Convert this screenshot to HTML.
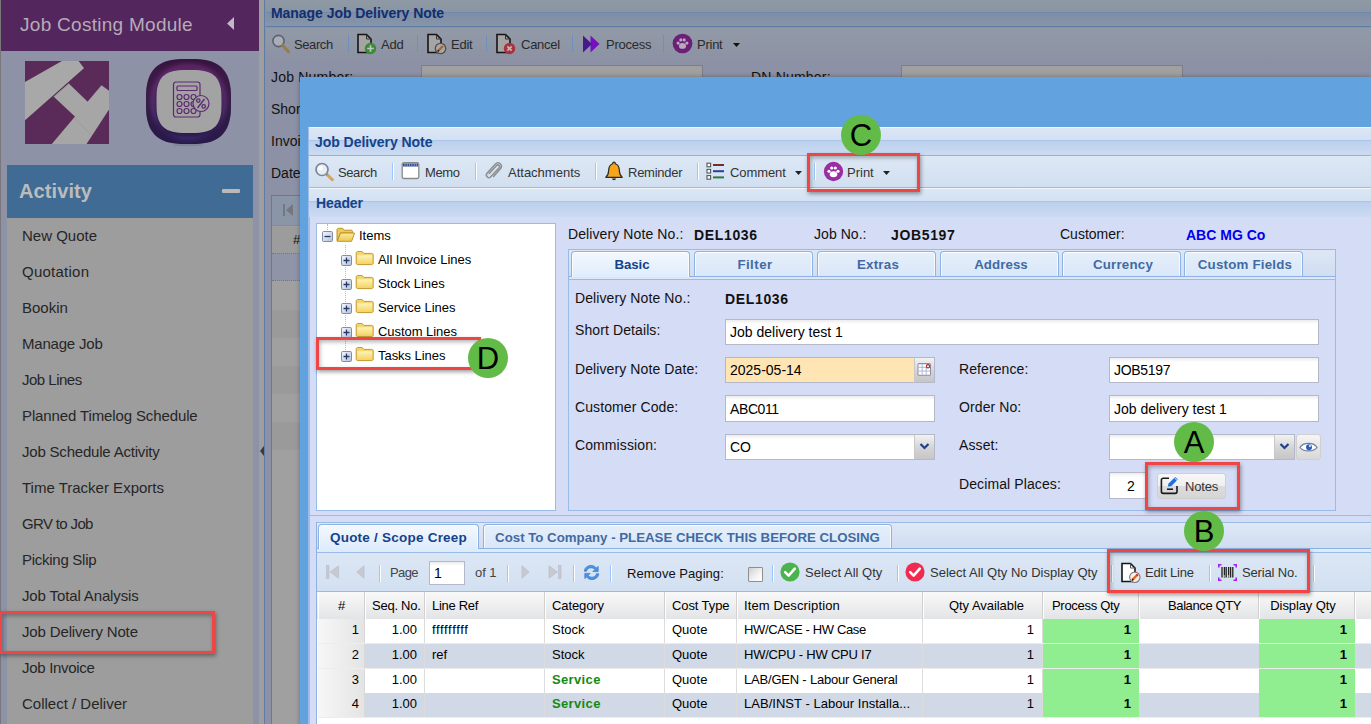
<!DOCTYPE html>
<html>
<head>
<meta charset="utf-8">
<title>Job Delivery Note</title>
<style>
*{box-sizing:border-box;margin:0;padding:0}
html,body{width:1371px;height:724px;overflow:hidden;background:#8d92a6;font-family:"Liberation Sans",sans-serif;font-size:13px;color:#000}
.a{position:absolute}
.t{position:absolute;white-space:nowrap;line-height:1}
/* ---------- sidebar ---------- */
#sb-head{left:1px;top:0;width:258px;height:51px;background:#53265d}
#sb-title{left:20px;top:15px;font-size:19px;color:#b6abb9;letter-spacing:.28px}
#act{left:7px;top:165px;width:246px;height:53px;background:#3f6b95}
#act-t{left:19px;top:181px;font-size:20px;font-weight:bold;color:#bcbcbc;letter-spacing:.1px}
#list{left:7px;top:218px;width:246px;height:507px;background:#9d9d9d}
.mi{left:22px;font-size:15px;color:#262626;letter-spacing:0}
/* ---------- background main panel ---------- */
#bgm{left:264px;top:0;width:1107px;height:724px;background:#8c91a5;border-left:1px solid #5f7ca6}
.bt{font-size:13px;color:#2a2a2a}
.bl{font-size:14px;color:#111}
/* ---------- window ---------- */
#win{left:300px;top:77px;width:1071px;height:660px;background:#62a3df;box-shadow:0 0 5px rgba(0,0,0,.3)}
#wp{left:308px;top:127px;width:1063px;height:597px;background:#d5dcf5;border-left:2px solid #9cbde9;border-top:1px solid #f2f6fc}
.hd{background:linear-gradient(#dbe7f5 0,#d3e1f3 12px,#abc5ea 12px,#abc5ea 13px,#bcd0ed 13px,#cbdbf1 27px);border-bottom:1px solid #8db2e3}
.ht{font-size:13px;font-weight:bold;color:#15428b}
.tb{background:linear-gradient(#dde8f5,#d1dff0);border-bottom:1px solid #99bbe8}
.tt{font-size:13px;color:#333;letter-spacing:.35px}
.sep{width:2px;border-left:1px solid #98c8ff;border-right:1px solid #fff}
.lb{font-size:14px;color:#111}
.in{background:#fff;border:1px solid #b5b8c8;font-size:14px;line-height:23px;padding-left:4px;height:25px;white-space:nowrap;overflow:hidden;
 background-image:linear-gradient(#ececec 0,#fff 4px)}
.tab{top:251px;padding-left:3px;height:25px;width:119px;border:1px solid #8db2e3;border-bottom:none;border-radius:4px 4px 0 0;background:linear-gradient(#e6effb,#d9e7f8);
 box-shadow:inset 0 1px 0 #fff,inset 1px 0 0 rgba(255,255,255,.7),inset -1px 0 0 rgba(255,255,255,.7);text-align:center;font-weight:bold;font-size:13.3px;color:#416aa3;line-height:25px}
.tab.on{background:linear-gradient(#f4f8fd,#deecfd);color:#15428b;height:26px}
.red{border:3px solid #ef4545;box-shadow:1px 2px 4px rgba(0,0,0,.38),inset 1px 2px 4px rgba(0,0,0,.3)}
.gc{width:38px;height:38px;border-radius:19px;background:#62bb46;text-align:center;font-size:31px;line-height:38px;color:#000}
.tr{font-size:13px;color:#000;letter-spacing:.2px}
.gh{top:592px;height:27px;font-size:13px;line-height:28px;color:#000;border-right:1px solid #d0d0d0;border-left:1px solid #fff;letter-spacing:-.1px;margin-left:1px;
 background:linear-gradient(#f9f9f9,#e3e4e6);white-space:nowrap;overflow:hidden;padding-left:6px}
.gr{left:318px;width:1054px;height:25px;background:#fff;border-bottom:1px solid #ededed}
.gr.alt{background:#d1d8e6}
.c{position:absolute;top:0;height:24px;line-height:21px;font-size:13px;white-space:nowrap;overflow:hidden;padding:0 7px;letter-spacing:0}
.r{text-align:right}
.g{background:#90ee90;font-weight:bold}
</style>
</head>
<body>
<!-- SIDEBAR -->
<div class="a" style="left:0;top:0;width:1px;height:724px;background:#78787a"></div>
<div class="a" id="sb-head"></div>
<div class="t" id="sb-title">Job Costing Module</div>
<svg class="a" style="left:226px;top:16px" width="9" height="15"><path d="M8 1 L1 7.5 L8 14 Z" fill="#c3b6c7"/></svg>
<div class="a" id="act"></div>
<div class="t" id="act-t">Activity</div>
<div class="a" style="left:222px;top:189px;width:18px;height:4px;background:#b9b9b9;border-radius:1px"></div>
<div class="a" id="list"></div>
<svg class="a" style="left:25px;top:61px" width="84" height="83" viewBox="0 0 580 573" preserveAspectRatio="none">
<rect width="580" height="573" fill="#5a2b58"/>
<polygon points="528,168 580,205 580,335 425,573 185,573" fill="#a6a6a6"/>
<polygon points="302,155 440,288 470,500 197,245" fill="#a6a6a6"/>
<polygon points="0,145 255,0 370,0 408,50 0,410" fill="#a8a8a8"/>
<path d="M408,52 L0,412" stroke="#4a2248" stroke-width="5" opacity=".5"/>
<path d="M337,390 L455,510" stroke="#8e8e8e" stroke-width="3"/>
<path d="M302,157 L200,247" stroke="#8a8a8a" stroke-width="6"/>
</svg>
<svg class="a" style="left:144px;top:57px" width="89" height="91" viewBox="-2 -2 89 91">
<defs>
<linearGradient id="lg2" x1="0" y1="0" x2="0" y2="1"><stop offset="0" stop-color="#4c1d55"/><stop offset=".15" stop-color="#5e2669"/><stop offset=".5" stop-color="#4e2a64"/><stop offset="1" stop-color="#37296e"/></linearGradient>
<radialGradient id="rg2" cx=".5" cy=".5" r=".5"><stop offset=".86" stop-color="#000" stop-opacity="0"/><stop offset="1" stop-color="#1a0a24" stop-opacity=".5"/></radialGradient>
<filter id="bl" x="-20%" y="-20%" width="140%" height="140%"><feGaussianBlur stdDeviation="2"/></filter>
</defs>
<ellipse cx="42" cy="86" rx="16" ry="1.2" fill="#7f8398"/>
<path d="M85.0,42.5 L84.9,50.4 L84.6,55.2 L84.0,59.2 L83.2,62.8 L82.2,66.0 L81.0,68.9 L79.5,71.5 L77.9,73.8 L76.0,76.0 L73.8,77.9 L71.5,79.5 L68.9,81.0 L66.0,82.2 L62.8,83.2 L59.2,84.0 L55.2,84.6 L50.4,84.9 L42.5,85.0 L34.6,84.9 L29.8,84.6 L25.8,84.0 L22.2,83.2 L19.0,82.2 L16.1,81.0 L13.5,79.5 L11.2,77.9 L9.0,76.0 L7.1,73.8 L5.5,71.5 L4.0,68.9 L2.8,66.0 L1.8,62.8 L1.0,59.2 L0.4,55.2 L0.1,50.4 L0.0,42.5 L0.1,34.6 L0.4,29.8 L1.0,25.8 L1.8,22.2 L2.8,19.0 L4.0,16.1 L5.5,13.5 L7.1,11.2 L9.0,9.0 L11.2,7.1 L13.5,5.5 L16.1,4.0 L19.0,2.8 L22.2,1.8 L25.8,1.0 L29.8,0.4 L34.6,0.1 L42.5,0.0 L50.4,0.1 L55.2,0.4 L59.2,1.0 L62.8,1.8 L66.0,2.8 L68.9,4.0 L71.5,5.5 L73.8,7.1 L76.0,9.0 L77.9,11.2 L79.5,13.5 L81.0,16.1 L82.2,19.0 L83.2,22.2 L84.0,25.8 L84.6,29.8 L84.9,34.6Z" fill="url(#lg2)"/>
<path d="M85.0,42.5 L84.9,50.4 L84.6,55.2 L84.0,59.2 L83.2,62.8 L82.2,66.0 L81.0,68.9 L79.5,71.5 L77.9,73.8 L76.0,76.0 L73.8,77.9 L71.5,79.5 L68.9,81.0 L66.0,82.2 L62.8,83.2 L59.2,84.0 L55.2,84.6 L50.4,84.9 L42.5,85.0 L34.6,84.9 L29.8,84.6 L25.8,84.0 L22.2,83.2 L19.0,82.2 L16.1,81.0 L13.5,79.5 L11.2,77.9 L9.0,76.0 L7.1,73.8 L5.5,71.5 L4.0,68.9 L2.8,66.0 L1.8,62.8 L1.0,59.2 L0.4,55.2 L0.1,50.4 L0.0,42.5 L0.1,34.6 L0.4,29.8 L1.0,25.8 L1.8,22.2 L2.8,19.0 L4.0,16.1 L5.5,13.5 L7.1,11.2 L9.0,9.0 L11.2,7.1 L13.5,5.5 L16.1,4.0 L19.0,2.8 L22.2,1.8 L25.8,1.0 L29.8,0.4 L34.6,0.1 L42.5,0.0 L50.4,0.1 L55.2,0.4 L59.2,1.0 L62.8,1.8 L66.0,2.8 L68.9,4.0 L71.5,5.5 L73.8,7.1 L76.0,9.0 L77.9,11.2 L79.5,13.5 L81.0,16.1 L82.2,19.0 L83.2,22.2 L84.0,25.8 L84.6,29.8 L84.9,34.6Z" fill="url(#rg2)"/>
<path d="M74.0,46.5 L73.9,52.7 L73.7,56.2 L73.3,59.0 L72.8,61.5 L72.1,63.7 L71.3,65.7 L70.3,67.5 L69.1,69.1 L67.8,70.5 L66.3,71.8 L64.7,72.9 L62.8,73.8 L60.8,74.7 L58.5,75.3 L56.0,75.8 L53.0,76.2 L49.4,76.4 L43.0,76.5 L36.6,76.4 L33.0,76.2 L30.0,75.8 L27.5,75.3 L25.2,74.7 L23.2,73.8 L21.3,72.9 L19.7,71.8 L18.2,70.5 L16.9,69.1 L15.7,67.5 L14.7,65.7 L13.9,63.7 L13.2,61.5 L12.7,59.0 L12.3,56.2 L12.1,52.7 L12.0,46.5 L12.1,40.3 L12.3,36.8 L12.7,34.0 L13.2,31.5 L13.9,29.3 L14.7,27.3 L15.7,25.5 L16.9,23.9 L18.2,22.5 L19.7,21.2 L21.3,20.1 L23.2,19.2 L25.2,18.3 L27.5,17.7 L30.0,17.2 L33.0,16.8 L36.6,16.6 L43.0,16.5 L49.4,16.6 L53.0,16.8 L56.0,17.2 L58.5,17.7 L60.8,18.3 L62.8,19.2 L64.7,20.1 L66.3,21.2 L67.8,22.5 L69.1,23.9 L70.3,25.5 L71.3,27.3 L72.1,29.3 L72.8,31.5 L73.3,34.0 L73.7,36.8 L73.9,40.3Z" fill="#140820" opacity=".6" filter="url(#bl)"/>
<path d="M75.5,42.5 L75.4,49.0 L75.2,52.7 L74.8,55.7 L74.2,58.3 L73.5,60.6 L72.6,62.6 L71.6,64.5 L70.4,66.2 L69.0,67.7 L67.4,69.0 L65.7,70.2 L63.8,71.2 L61.6,72.1 L59.3,72.8 L56.6,73.3 L53.5,73.7 L49.7,73.9 L43.0,74.0 L36.3,73.9 L32.5,73.7 L29.4,73.3 L26.7,72.8 L24.4,72.1 L22.2,71.2 L20.3,70.2 L18.6,69.0 L17.0,67.7 L15.6,66.2 L14.4,64.5 L13.4,62.6 L12.5,60.6 L11.8,58.3 L11.2,55.7 L10.8,52.7 L10.6,49.0 L10.5,42.5 L10.6,36.0 L10.8,32.3 L11.2,29.3 L11.8,26.7 L12.5,24.4 L13.4,22.4 L14.4,20.5 L15.6,18.8 L17.0,17.3 L18.6,16.0 L20.3,14.8 L22.2,13.8 L24.4,12.9 L26.7,12.2 L29.4,11.7 L32.5,11.3 L36.3,11.1 L43.0,11.0 L49.7,11.1 L53.5,11.3 L56.6,11.7 L59.3,12.2 L61.6,12.9 L63.8,13.8 L65.7,14.8 L67.4,16.0 L69.0,17.3 L70.4,18.8 L71.6,20.5 L72.6,22.4 L73.5,24.4 L74.2,26.7 L74.8,29.3 L75.2,32.3 L75.4,36.0Z" fill="#a3a3a3"/>
<g fill="none" stroke="#5d2a72" stroke-width="1.2">
<rect x="27.5" y="23" width="26.5" height="35" rx="2.5"/>
<rect x="31" y="27" width="20" height="4.5" rx="1"/>
<circle cx="33.5" cy="38" r="2.5"/><circle cx="40.5" cy="38" r="2.5"/><circle cx="47.5" cy="38" r="2.5"/>
<circle cx="33.5" cy="45" r="2.5"/><circle cx="40.5" cy="45" r="2.5"/><circle cx="47.5" cy="45" r="2.5"/>
<circle cx="33.5" cy="52" r="2.5"/><circle cx="40.5" cy="52" r="2.5"/><circle cx="47.5" cy="52" r="2.5"/>
<circle cx="55" cy="44.5" r="8" fill="#a3a3a3"/>
</g>
<g stroke="#5d2a72" stroke-width="1.3" fill="none"><path d="M58.5 40 L51.5 49"/><circle cx="52.3" cy="41.6" r="1.7"/><circle cx="57.7" cy="47.4" r="1.7"/></g>
</svg>
<!-- splitter -->
<div class="a" style="left:259px;top:0;width:6px;height:724px;background:#9e9e9e"></div>
<div class="t mi" style="top:228px">New Quote</div>
<div class="t mi" style="top:264px;letter-spacing:.25px">Quotation</div>
<div class="t mi" style="top:300px">Bookin</div>
<div class="t mi" style="top:336px;letter-spacing:-.2px">Manage Job</div>
<div class="t mi" style="top:372px;letter-spacing:-0.5px">Job Lines</div>
<div class="t mi" style="top:408px;letter-spacing:-.12px">Planned Timelog Schedule</div>
<div class="t mi" style="top:444px;letter-spacing:-0.2px">Job Schedule Activity</div>
<div class="t mi" style="top:480px">Time Tracker Exports</div>
<div class="t mi" style="top:516px;letter-spacing:-0.65px">GRV to Job</div>
<div class="t mi" style="top:552px;letter-spacing:-0.27px">Picking Slip</div>
<div class="t mi" style="top:588px;letter-spacing:-0.13px">Job Total Analysis</div>
<div class="t mi" style="top:624px;letter-spacing:-0.15px">Job Delivery Note</div>
<div class="t mi" style="top:660px;letter-spacing:-0.3px">Job Invoice</div>
<div class="t mi" style="top:696px">Collect / Deliver</div>
<div class="a red" style="left:-1px;top:611px;width:216px;height:43px"></div>

<!-- BACKGROUND MAIN -->
<div class="a" id="bgm"></div>

<div class="a" style="left:266px;top:0;width:1105px;height:27px;background:linear-gradient(#8e99a5 0,#8995a2 12px,#7088a9 12px,#7088a9 13px,#7c8da5 13px,#8996a9 27px);border-bottom:1px solid #5f7ca6"></div>
<div class="t" style="left:271px;top:6px;font-size:14px;font-weight:bold;color:#112e6e;letter-spacing:-.05px">Manage Job Delivery Note</div>
<div class="a" style="left:266px;top:28px;width:1105px;height:33px;background:linear-gradient(#929aa7,#8c92a4)"></div>
<!-- bg toolbar -->
<svg class="a" style="left:271px;top:33px" width="20" height="22" viewBox="0 0 20 22"><circle cx="7.5" cy="8" r="5.6" fill="#a9adb6" stroke="#5b6272" stroke-width="1.6"/><path d="M11.8 12.6 L17.5 18.8" stroke="#9a7a4a" stroke-width="3" stroke-linecap="round"/></svg>
<div class="t bt" style="left:294px;top:38px;letter-spacing:-.4px">Search</div>
<div class="a" style="left:348px;top:35px;width:1px;height:17px;background:#6f8fbf"></div>
<svg class="a" style="left:356px;top:32px" width="22" height="24" viewBox="0 0 22 24"><path d="M2 2.5 H10.5 L15 7 V20.5 H2 Z" fill="#a5a5a5" stroke="#141414" stroke-width="1.6"/><path d="M10.5 2.5 V7 H15" fill="none" stroke="#333" stroke-width="1"/><circle cx="14.5" cy="16.5" r="5.7" fill="#3d8a3a"/><path d="M14.5 13.2 V19.8 M11.2 16.5 H17.8" stroke="#b9c9b9" stroke-width="1.7"/></svg>
<div class="t bt" style="left:381px;top:38px;letter-spacing:-.25px">Add</div>
<div class="a" style="left:417px;top:35px;width:1px;height:17px;background:#6f8fbf"></div>
<svg class="a" style="left:426px;top:32px" width="22" height="24" viewBox="0 0 22 24"><path d="M2 2.5 H10.5 L15 7 V20.5 H2 Z" fill="#a5a5a5" stroke="#141414" stroke-width="1.6"/><path d="M10.5 2.5 V7 H15" fill="none" stroke="#333" stroke-width="1"/><circle cx="14.5" cy="16.5" r="5.2" fill="#a8a8a8" stroke="#5a4a4a" stroke-width="1.3"/><path d="M12 19 L17 14" stroke="#b0641e" stroke-width="2.4"/><path d="M11.6 19.6 L12.8 18.2" stroke="#222" stroke-width="1.5"/></svg>
<div class="t bt" style="left:451px;top:38px;letter-spacing:-.25px">Edit</div>
<div class="a" style="left:486px;top:35px;width:1px;height:17px;background:#6f8fbf"></div>
<svg class="a" style="left:495px;top:32px" width="22" height="24" viewBox="0 0 22 24"><path d="M2 2.5 H10.5 L15 7 V20.5 H2 Z" fill="#a5a5a5" stroke="#141414" stroke-width="1.6"/><path d="M10.5 2.5 V7 H15" fill="none" stroke="#333" stroke-width="1"/><circle cx="14.5" cy="16.5" r="5.7" fill="#a83240"/><path d="M12.3 14.3 L16.7 18.7 M16.7 14.3 L12.3 18.7" stroke="#c8b0b4" stroke-width="1.7"/></svg>
<div class="t bt" style="left:521px;top:38px;letter-spacing:-.25px">Cancel</div>
<div class="a" style="left:572px;top:35px;width:1px;height:17px;background:#6f8fbf"></div>
<svg class="a" style="left:582px;top:34px" width="20" height="20" viewBox="0 0 20 20"><path d="M8.5 1.5 L17.5 10 L8.5 18.5 Z" fill="#7410bf"/><path d="M1 1.5 L10 10 L1 18.5 Z" fill="#47198c"/></svg>
<div class="t bt" style="left:606px;top:38px;letter-spacing:-.25px">Process</div>
<div class="a" style="left:663px;top:35px;width:1px;height:17px;background:#6f8fbf"></div>
<svg class="a" style="left:672px;top:33px" width="21" height="21" viewBox="0 0 20 20"><circle cx="10" cy="10" r="9.4" fill="#6a1f78"/><ellipse cx="10" cy="12.3" rx="3.4" ry="2.8" fill="#b9a9bd"/><circle cx="5.8" cy="9.6" r="1.5" fill="#b9a9bd"/><circle cx="8.4" cy="6.6" r="1.5" fill="#b9a9bd"/><circle cx="11.6" cy="6.6" r="1.5" fill="#b9a9bd"/><circle cx="14.2" cy="9.6" r="1.5" fill="#b9a9bd"/></svg>
<div class="t bt" style="left:697px;top:38px;letter-spacing:-.25px">Print</div>
<svg class="a" style="left:732px;top:42px" width="9" height="6"><path d="M1 1 H8 L4.5 5 Z" fill="#111"/></svg>
<!-- bg form -->
<div class="t bl" style="left:271px;top:70px;letter-spacing:.2px">Job Number:</div>
<div class="t bl" style="left:271px;top:102px">Short Details:</div>
<div class="t bl" style="left:271px;top:134px">Invoice</div>
<div class="t bl" style="left:271px;top:166px">Date</div>
<div class="a" style="left:421px;top:65px;width:282px;height:25px;background:#a0a0a0;border:1px solid #7c7f89"></div>
<div class="t bl" style="left:751px;top:70px;letter-spacing:.2px">DN Number:</div>
<div class="a" style="left:901px;top:65px;width:282px;height:25px;background:#a0a0a0;border:1px solid #7c7f89"></div>
<!-- bg grid -->
<div class="a" style="left:271px;top:195px;width:40px;height:529px;background:#a0a0a0;border-left:1px solid #5f7ca6;border-top:1px solid #5f7ca6"></div>
<div class="a" style="left:272px;top:196px;width:40px;height:30px;background:#8b95a8;border-bottom:1px solid #7a8db0"></div>
<svg class="a" style="left:282px;top:203px" width="12" height="14"><rect x="1" y="1" width="2" height="12" fill="#74777f"/><path d="M11 1 L4 7 L11 13 Z" fill="#74777f"/></svg>
<div class="a" style="left:272px;top:227px;width:40px;height:26px;background:#9c9c9c"></div>
<div class="t" style="left:293px;top:233px;font-size:13px;color:#111">#</div>
<div class="a" style="left:272px;top:253px;width:40px;height:28px;background:#8f95a7;border-top:1px dotted #777;border-bottom:1px dotted #777"></div>
<div class="a" style="left:272px;top:310px;width:40px;height:28px;background:#9a9a9a"></div>
<div class="a" style="left:272px;top:366px;width:40px;height:28px;background:#9a9a9a"></div>
<div class="a" style="left:272px;top:422px;width:40px;height:28px;background:#9a9a9a"></div>
<svg class="a" style="left:260px;top:446px" width="5" height="10"><path d="M4 0 L0 5 L4 10 Z" fill="#3a3a3a"/></svg>

<!-- WINDOW -->
<div class="a" id="win"></div>
<div class="a" id="wp"></div>

<!-- window panel header -->
<div class="a hd" style="left:309px;top:128px;width:1062px;height:28px"></div>
<div class="t ht" style="left:315px;top:135px;font-size:14px;letter-spacing:-.05px">Job Delivery Note</div>
<!-- toolbar -->
<div class="a tb" style="left:309px;top:156px;width:1062px;height:32px"></div>
<svg class="a" style="left:314px;top:161px" width="22" height="22" viewBox="0 0 22 22"><circle cx="8" cy="8.5" r="6" fill="#e6edf5" stroke="#7c8596" stroke-width="1.7"/><circle cx="6.5" cy="7" r="2.5" fill="#fff" opacity=".8"/><path d="M12.8 13.4 L18.3 18.6" stroke="#d9a45e" stroke-width="3.2" stroke-linecap="round"/><path d="M12 12.6 L13.6 14.1" stroke="#8a8f99" stroke-width="2.6"/></svg>
<div class="t tt" style="left:338px;top:166px;letter-spacing:-.4px">Search</div>
<div class="a sep" style="left:392px;top:163px;height:17px"></div>
<svg class="a" style="left:401px;top:161px" width="20" height="20" viewBox="0 0 20 20"><rect x="1.2" y="1.7" width="16.6" height="15.8" rx="1.8" fill="#fff" stroke="#8a8a8a" stroke-width="1.3"/><path d="M2 2.5 H17 V5.5 H2 Z" fill="#2b4a8f"/><path d="M4 3 V5 M6.3 3 V5 M8.6 3 V5 M10.9 3 V5 M13.2 3 V5 M15.3 3 V5" stroke="#9fb4de" stroke-width=".8"/></svg>
<div class="t tt" style="left:425px;top:166px;letter-spacing:-.35px">Memo</div>
<div class="a sep" style="left:475px;top:163px;height:17px"></div>
<svg class="a" style="left:483px;top:160px" width="22" height="23" viewBox="0 0 22 23"><path d="M6.2 13.5 L13.6 5.6 C15.2 3.9 17.6 6.0 16.1 7.8 L8.1 16.6 C5.6 19.4 1.6 16.0 4.2 13.0 L12.2 4.2 C15.4 0.8 20.6 5.0 17.4 8.8 L10.6 16.4" fill="none" stroke="#8e8e8e" stroke-width="1.5" stroke-linecap="round"/></svg>
<div class="t tt" style="left:508px;top:166px;letter-spacing:0">Attachments</div>
<div class="a sep" style="left:595px;top:163px;height:17px"></div>
<svg class="a" style="left:603px;top:160px" width="22" height="23" viewBox="0 0 22 23"><path d="M11 2.2 C11.9 2.2 12.4 2.9 12.3 3.7 C15.2 4.6 16.2 7.2 16.3 10.2 C16.4 13.6 17.2 15.6 19.2 17.3 H2.8 C4.8 15.6 5.6 13.6 5.7 10.2 C5.8 7.2 6.8 4.6 9.7 3.7 C9.6 2.9 10.1 2.2 11 2.2 Z" fill="#f5a61b" stroke="#2a2a2a" stroke-width="1.2" stroke-linejoin="round"/><path d="M8.8 18.6 A2.3 2.3 0 0 0 13.2 18.6 Z" fill="#2a2a2a"/></svg>
<div class="t tt" style="left:628px;top:166px;letter-spacing:-.25px">Reminder</div>
<div class="a sep" style="left:697px;top:163px;height:17px"></div>
<svg class="a" style="left:706px;top:162px" width="20" height="19" viewBox="0 0 20 19"><g fill="#fff" stroke="#555" stroke-width="1.1"><rect x="1" y="1.2" width="3.6" height="3.6"/><rect x="1" y="7.4" width="3.6" height="3.6"/><rect x="1" y="13.6" width="3.6" height="3.6"/></g><path d="M7 3 H18" stroke="#7a2a2a" stroke-width="2"/><path d="M7 9.2 H18" stroke="#2a3f9a" stroke-width="2"/><path d="M7 15.4 H18" stroke="#2a7a3a" stroke-width="2"/></svg>
<div class="t tt" style="left:730px;top:166px;letter-spacing:-.1px">Comment</div>
<svg class="a" style="left:794px;top:170px" width="9" height="6"><path d="M1 1 H8 L4.5 5 Z" fill="#222"/></svg>
<div class="a sep" style="left:814px;top:163px;height:17px"></div>
<svg class="a" style="left:823px;top:161px" width="21" height="21" viewBox="0 0 20 20"><circle cx="10" cy="10" r="9.2" fill="#9b2da3"/><ellipse cx="10" cy="12.6" rx="3.6" ry="2.9" fill="#fff"/><circle cx="5.7" cy="9.8" r="1.5" fill="#fff"/><circle cx="8.3" cy="6.7" r="1.5" fill="#fff"/><circle cx="11.7" cy="6.7" r="1.5" fill="#fff"/><circle cx="14.3" cy="9.8" r="1.5" fill="#fff"/></svg>
<div class="t tt" style="left:847px;top:166px;letter-spacing:0">Print</div>
<svg class="a" style="left:882px;top:170px" width="9" height="6"><path d="M1 1 H8 L4.5 5 Z" fill="#222"/></svg>
<!-- Header panel head -->
<div class="a hd" style="left:309px;top:188px;width:1062px;height:29px;border-top:1px solid #f2f6fc;border-bottom:none;background:linear-gradient(#dbe7f5 0,#d3e1f3 12px,#abc5ea 12px,#abc5ea 13px,#bcd0ed 13px,#cbdbf1 28px)"></div>
<div class="t ht" style="left:316px;top:196px;font-size:14px;letter-spacing:-.1px">Header</div>
<!-- C marker -->
<div class="a red" style="left:807px;top:153px;width:113px;height:39px"></div>
<div class="a gc" style="left:841px;top:115px;width:40px;height:40px;border-radius:20px;line-height:42px">C</div>

<svg width="0" height="0" class="a"><defs><linearGradient id="fg" x1="0" y1="0" x2="0" y2="1"><stop offset="0" stop-color="#fdf3b8"/><stop offset="1" stop-color="#f3d467"/></linearGradient><linearGradient id="fg2" x1="0" y1="0" x2="0" y2="1"><stop offset="0" stop-color="#fbeb9c"/><stop offset="1" stop-color="#edc950"/></linearGradient><linearGradient id="pg" x1="0" y1="0" x2="1" y2="1"><stop offset="0" stop-color="#f6f8fc"/><stop offset="1" stop-color="#b4c0da"/></linearGradient></defs></svg>
<!-- tree -->
<div class="a" style="left:316px;top:223px;width:240px;height:288px;background:#fff;border:1px solid #99bbe8"></div>
<div class="a" style="left:327px;top:224px;width:0;height:8px;border-left:1px dotted #bbb"></div>
<div class="a" style="left:345px;top:245px;width:0;height:111px;border-left:1px dotted #bbb"></div>
<svg class="a" style="left:322px;top:231px" width="11" height="11" viewBox="0 0 11 11"><rect x=".5" y=".5" width="10" height="10" rx="1.2" fill="url(#pg)" stroke="#7d8dab"/><path d="M2.5 5.5 H8.5" stroke="#223a6a" stroke-width="1.3"/></svg><svg class="a" style="left:335px;top:226px" width="21" height="17" viewBox="0 0 21 17"><path d="M2 4 C2 3 2.6 2.3 3.6 2.3 H7.6 L9.2 4.2 H16 C17 4.2 17.6 4.8 17.6 5.8 V7 H5.5 L2 14.5 Z" fill="#eccb58" stroke="#bf932a" stroke-width="1"/><path d="M5.6 7 H19.6 L16.6 15.3 H2.2 Z" fill="url(#fg2)" stroke="#bf932a" stroke-width="1" stroke-linejoin="round"/></svg>
<div class="t tr" style="left:359px;top:229px;letter-spacing:0">Items</div>
<svg class="a" style="left:341px;top:255px" width="11" height="11" viewBox="0 0 11 11"><rect x=".5" y=".5" width="10" height="10" rx="1.2" fill="url(#pg)" stroke="#7d8dab"/><path d="M2.5 5.5 H8.5 M5.5 2.5 V8.5" stroke="#223a6a" stroke-width="1.3"/></svg><svg class="a" style="left:355px;top:250px" width="20" height="16" viewBox="0 0 20 16"><path d="M1.2 3.2 C1.2 2.2 1.8 1.5 2.8 1.5 H7.2 L8.8 3.4 H16.6 C17.6 3.4 18.2 4 18.2 5 V13 C18.2 14 17.6 14.6 16.6 14.6 H2.8 C1.8 14.6 1.2 14 1.2 13 Z" fill="#f3d672" stroke="#c59a2c" stroke-width="1"/><path d="M2.2 5.2 H17.2 V12.6 C17.2 13.3 16.8 13.7 16.1 13.7 H3.3 C2.6 13.7 2.2 13.3 2.2 12.6 Z" fill="url(#fg)"/></svg><div class="t tr" style="left:378px;top:253px;letter-spacing:-.05px">All Invoice Lines</div>
<svg class="a" style="left:341px;top:279px" width="11" height="11" viewBox="0 0 11 11"><rect x=".5" y=".5" width="10" height="10" rx="1.2" fill="url(#pg)" stroke="#7d8dab"/><path d="M2.5 5.5 H8.5 M5.5 2.5 V8.5" stroke="#223a6a" stroke-width="1.3"/></svg><svg class="a" style="left:355px;top:274px" width="20" height="16" viewBox="0 0 20 16"><path d="M1.2 3.2 C1.2 2.2 1.8 1.5 2.8 1.5 H7.2 L8.8 3.4 H16.6 C17.6 3.4 18.2 4 18.2 5 V13 C18.2 14 17.6 14.6 16.6 14.6 H2.8 C1.8 14.6 1.2 14 1.2 13 Z" fill="#f3d672" stroke="#c59a2c" stroke-width="1"/><path d="M2.2 5.2 H17.2 V12.6 C17.2 13.3 16.8 13.7 16.1 13.7 H3.3 C2.6 13.7 2.2 13.3 2.2 12.6 Z" fill="url(#fg)"/></svg><div class="t tr" style="left:378px;top:277px;letter-spacing:-.05px">Stock Lines</div>
<svg class="a" style="left:341px;top:303px" width="11" height="11" viewBox="0 0 11 11"><rect x=".5" y=".5" width="10" height="10" rx="1.2" fill="url(#pg)" stroke="#7d8dab"/><path d="M2.5 5.5 H8.5 M5.5 2.5 V8.5" stroke="#223a6a" stroke-width="1.3"/></svg><svg class="a" style="left:355px;top:298px" width="20" height="16" viewBox="0 0 20 16"><path d="M1.2 3.2 C1.2 2.2 1.8 1.5 2.8 1.5 H7.2 L8.8 3.4 H16.6 C17.6 3.4 18.2 4 18.2 5 V13 C18.2 14 17.6 14.6 16.6 14.6 H2.8 C1.8 14.6 1.2 14 1.2 13 Z" fill="#f3d672" stroke="#c59a2c" stroke-width="1"/><path d="M2.2 5.2 H17.2 V12.6 C17.2 13.3 16.8 13.7 16.1 13.7 H3.3 C2.6 13.7 2.2 13.3 2.2 12.6 Z" fill="url(#fg)"/></svg><div class="t tr" style="left:378px;top:301px;letter-spacing:-.05px">Service Lines</div>
<svg class="a" style="left:341px;top:327px" width="11" height="11" viewBox="0 0 11 11"><rect x=".5" y=".5" width="10" height="10" rx="1.2" fill="url(#pg)" stroke="#7d8dab"/><path d="M2.5 5.5 H8.5 M5.5 2.5 V8.5" stroke="#223a6a" stroke-width="1.3"/></svg><svg class="a" style="left:355px;top:322px" width="20" height="16" viewBox="0 0 20 16"><path d="M1.2 3.2 C1.2 2.2 1.8 1.5 2.8 1.5 H7.2 L8.8 3.4 H16.6 C17.6 3.4 18.2 4 18.2 5 V13 C18.2 14 17.6 14.6 16.6 14.6 H2.8 C1.8 14.6 1.2 14 1.2 13 Z" fill="#f3d672" stroke="#c59a2c" stroke-width="1"/><path d="M2.2 5.2 H17.2 V12.6 C17.2 13.3 16.8 13.7 16.1 13.7 H3.3 C2.6 13.7 2.2 13.3 2.2 12.6 Z" fill="url(#fg)"/></svg><div class="t tr" style="left:378px;top:325px;letter-spacing:-.05px">Custom Lines</div>
<svg class="a" style="left:341px;top:351px" width="11" height="11" viewBox="0 0 11 11"><rect x=".5" y=".5" width="10" height="10" rx="1.2" fill="url(#pg)" stroke="#7d8dab"/><path d="M2.5 5.5 H8.5 M5.5 2.5 V8.5" stroke="#223a6a" stroke-width="1.3"/></svg><svg class="a" style="left:355px;top:346px" width="20" height="16" viewBox="0 0 20 16"><path d="M1.2 3.2 C1.2 2.2 1.8 1.5 2.8 1.5 H7.2 L8.8 3.4 H16.6 C17.6 3.4 18.2 4 18.2 5 V13 C18.2 14 17.6 14.6 16.6 14.6 H2.8 C1.8 14.6 1.2 14 1.2 13 Z" fill="#f3d672" stroke="#c59a2c" stroke-width="1"/><path d="M2.2 5.2 H17.2 V12.6 C17.2 13.3 16.8 13.7 16.1 13.7 H3.3 C2.6 13.7 2.2 13.3 2.2 12.6 Z" fill="url(#fg)"/></svg><div class="t tr" style="left:378px;top:349px;letter-spacing:-.05px">Tasks Lines</div>

<!-- top info -->
<div class="t lb" style="left:568px;top:227px;letter-spacing:.1px">Delivery Note No.:</div>
<div class="t lb" style="left:694px;top:228px;font-weight:bold;letter-spacing:.65px">DEL1036</div>
<div class="t lb" style="left:814px;top:227px;letter-spacing:.05px">Job No.:</div>
<div class="t lb" style="left:891px;top:228px;font-weight:bold;letter-spacing:.65px">JOB5197</div>
<div class="t lb" style="left:1060px;top:227px">Customer:</div>
<div class="t lb" style="left:1186px;top:228px;font-weight:bold;color:#0000ee">ABC MG Co</div>
<!-- tab strip -->
<div class="a" style="left:568px;top:249px;width:768px;height:30px;background:linear-gradient(#dde7f6,#cfdcf0);border:1px solid #99bbe8;border-bottom:none"></div>
<div class="a" style="left:568px;top:276px;width:768px;height:4px;background:#dbe7f8;border-top:1px solid #8db2e3;border-left:1px solid #99bbe8;border-right:1px solid #99bbe8"></div>
<div class="a" style="left:568px;top:279px;width:768px;height:232px;background:#d5dcf5;border:1px solid #99bbe8"></div>
<div class="a tab on" style="left:571px;letter-spacing:-0.05px">Basic</div>
<div class="a tab" style="left:694px;letter-spacing:0.45px">Filter</div>
<div class="a tab" style="left:817px;letter-spacing:0.25px">Extras</div>
<div class="a tab" style="left:940px;letter-spacing:0.05px">Address</div>
<div class="a tab" style="left:1062px;letter-spacing:0.2px">Currency</div>
<div class="a tab" style="left:1184px;letter-spacing:0.22px">Custom Fields</div>

<!-- form -->
<div class="t lb" style="left:575px;top:291px;letter-spacing:.1px">Delivery Note No.:</div>
<div class="t lb" style="left:725px;top:292px;font-weight:bold;letter-spacing:.65px">DEL1036</div>
<div class="t lb" style="left:575px;top:323px;letter-spacing:.1px">Short Details:</div>
<div class="a in" style="left:725px;top:319px;width:594px;height:26px;line-height:25px">Job delivery test 1</div>
<div class="t lb" style="left:575px;top:362px;letter-spacing:.1px">Delivery Note Date:</div>
<div class="a in" style="left:725px;top:357px;width:190px;height:26px;line-height:25px;background:#ffe5b4">2025-05-14</div>
<div class="a" style="left:914px;top:357px;width:21px;height:26px;border:1px solid #b5b8c8;border-left:1px solid #c8c8c8;background:linear-gradient(#f2f2f2,#d4d4d4 55%,#c6c6c6)"></div>
<svg class="a" style="left:917px;top:362px" width="15" height="16" viewBox="0 0 15 15" preserveAspectRatio="none"><rect x="1" y="1.5" width="12.5" height="11" rx="1" fill="#fff" stroke="#8a8fa8"/><path d="M1.5 5 H13 M1.5 8.5 H13 M5.2 2 V12 M9.2 5 V12" stroke="#a8b4d0" stroke-width=".9"/><circle cx="11" cy="4" r="1.6" fill="#fff" stroke="#b0202a" stroke-width="1.1"/></svg>
<div class="t lb" style="left:959px;top:362px;letter-spacing:.1px">Reference:</div>
<div class="a in" style="left:1109px;top:357px;width:210px;height:26px;line-height:25px;letter-spacing:-.3px">JOB5197</div>
<div class="t lb" style="left:575px;top:400px;letter-spacing:.1px">Customer Code:</div>
<div class="a in" style="left:725px;top:395px;width:210px;height:27px;line-height:26px;letter-spacing:-.4px">ABC011</div>
<div class="t lb" style="left:959px;top:400px;letter-spacing:.1px">Order No:</div>
<div class="a in" style="left:1109px;top:395px;width:210px;height:27px;line-height:26px">Job delivery test 1</div>
<div class="t lb" style="left:575px;top:438px;letter-spacing:.1px">Commission:</div>
<div class="a in" style="left:725px;top:434px;width:190px;height:26px;line-height:25px">CO</div>
<div class="a" style="left:914px;top:434px;width:21px;height:26px;border:1px solid #b5b8c8;border-left:1px solid #c8c8c8;background:linear-gradient(#f2f2f2,#d4d4d4 55%,#c6c6c6)"></div>
<svg class="a" style="left:919px;top:442px" width="11" height="9"><path d="M1.5 2 L5.5 6 L9.5 2" fill="none" stroke="#1f3f8f" stroke-width="2.2"/></svg>
<div class="t lb" style="left:959px;top:438px;letter-spacing:.1px">Asset:</div>
<div class="a in" style="left:1109px;top:434px;width:166px;height:26px"></div>
<div class="a" style="left:1274px;top:434px;width:21px;height:26px;border:1px solid #b5b8c8;border-left:1px solid #c8c8c8;background:linear-gradient(#f2f2f2,#d4d4d4 55%,#c6c6c6)"></div>
<svg class="a" style="left:1279px;top:442px" width="11" height="9"><path d="M1.5 2 L5.5 6 L9.5 2" fill="none" stroke="#1f3f8f" stroke-width="2.2"/></svg>
<div class="a" style="left:1296px;top:434px;width:25px;height:26px;border:1px solid #d0d0d0;border-radius:3px;background:linear-gradient(#f6f6f6,#e4e4e4 55%,#d8d8d8)"></div>
<svg class="a" style="left:1299px;top:440px" width="19" height="14" viewBox="0 0 19 14"><path d="M1 7.5 C4 2 15 2 18 7.5 C15 12 4 12 1 7.5 Z" fill="#fff" stroke="#6f7f9f" stroke-width="1.2"/><circle cx="10" cy="7.3" r="3" fill="#2a5fc0"/><circle cx="11" cy="6" r="1" fill="#fff"/></svg>
<div class="t lb" style="left:959px;top:477px;letter-spacing:.1px">Decimal Places:</div>
<div class="a in" style="left:1109px;top:472px;width:38px;height:27px;line-height:26px;padding-left:17px">2</div>
<div class="a" style="left:1157px;top:473px;width:69px;height:26px;border:1px solid #cfcfcf;border-radius:3px;background:linear-gradient(#f7f7f7 0,#efefef 48%,#dcdcdc 52%,#d6d6d6 100%)"></div>
<svg class="a" style="left:1160px;top:475px" width="20" height="21" viewBox="0 0 20 21"><path d="M9 3.2 H3.2 C2.2 3.2 1.4 4 1.4 5 V16.6 C1.4 17.6 2.2 18.4 3.2 18.4 H15.2 C16.2 18.4 17 17.6 17 16.6 V11" fill="none" stroke="#1a1a1a" stroke-width="1.6"/><path d="M7 14.2 H13" stroke="#111" stroke-width="1.5"/><path d="M7.8 11.6 L8.6 8.6 L15.2 2 L17.8 4.6 L11.2 11.2 Z" fill="#1f6fe0"/><path d="M14.4 2.8 L17 5.4" stroke="#fff" stroke-width=".9"/></svg>
<div class="t" style="left:1185px;top:480px;font-size:13px;color:#333;letter-spacing:-.15px">Notes</div>
<!-- lines under the header body -->
<div class="a" style="left:309px;top:515px;width:1062px;height:1px;background:#99bbe8"></div>
<!-- markers A, D -->
<div class="a red" style="left:1145px;top:462px;width:95px;height:48px"></div>
<div class="a gc" style="left:1174px;top:422px;width:40px;height:40px;border-radius:20px;line-height:42px">A</div>
<div class="a red" style="left:316px;top:337px;width:165px;height:33px"></div>
<div class="a gc" style="left:468px;top:338px;width:40px;height:40px;border-radius:20px;line-height:42px">D</div>

<!-- bottom tab panel -->
<div class="a" style="left:316px;top:522px;width:1055px;height:28px;background:linear-gradient(#dee8f6,#cfdcf0);border-top:1px solid #99bbe8;border-left:1px solid #99bbe8"></div>
<div class="a" style="left:316px;top:548px;width:1055px;height:5px;background:#deebfb;border-top:1px solid #8db2e3;border-left:1px solid #99bbe8;border-bottom:1px solid #99bbe8"></div>
<div class="a tab on" style="left:318px;top:524px;width:161px;height:25px;padding-left:0;font-size:13.5px;letter-spacing:.23px;line-height:26px">Quote / Scope Creep</div>
<div class="a tab" style="left:483px;top:524px;width:409px;height:24px;padding-left:0;font-size:13.25px;letter-spacing:0;line-height:25px">Cost To Company - PLEASE CHECK THIS BEFORE CLOSING</div>
<!-- paging toolbar -->
<div class="a" style="left:316px;top:553px;width:1055px;height:39px;background:linear-gradient(#dce7f5,#d2e0f1);border-left:1px solid #99bbe8;border-bottom:1px solid #99bbe8"></div>
<svg class="a" style="left:326px;top:565px" width="14" height="14"><rect x=".5" y=".5" width="2.4" height="13" fill="#c6c9d2" stroke="#b7bac4" stroke-width=".6"/><path d="M12.5 .8 L4.2 7 L12.5 13.2 Z" fill="#c6c9d2" stroke="#b7bac4" stroke-width=".6"/></svg>
<svg class="a" style="left:356px;top:565px" width="9" height="14"><path d="M8 .8 L.8 7 L8 13.2 Z" fill="#c6c9d2" stroke="#b7bac4" stroke-width=".6"/></svg>
<div class="a sep" style="left:379px;top:565px;height:17px"></div>
<div class="t tt" style="left:390px;top:566px;letter-spacing:-.6px;color:#444">Page</div>
<div class="a in" style="left:429px;top:561px;width:36px;height:24px;line-height:23px;padding-left:4px">1</div>
<div class="t tt" style="left:475px;top:566px;letter-spacing:-.1px;color:#444">of 1</div>
<div class="a sep" style="left:507px;top:565px;height:17px"></div>
<svg class="a" style="left:521px;top:565px" width="9" height="14"><path d="M1 .8 L8.2 7 L1 13.2 Z" fill="#c6c9d2" stroke="#b7bac4" stroke-width=".6"/></svg>
<svg class="a" style="left:548px;top:565px" width="14" height="14"><rect x="10.6" y=".5" width="2.4" height="13" fill="#c6c9d2" stroke="#b7bac4" stroke-width=".6"/><path d="M1 .8 L9.3 7 L1 13.2 Z" fill="#c6c9d2" stroke="#b7bac4" stroke-width=".6"/></svg>
<div class="a sep" style="left:573px;top:565px;height:17px"></div>
<svg class="a" style="left:582px;top:563px" width="19" height="19" viewBox="0 0 19 19"><path d="M2.2 8.2 C2.6 4.6 5.6 2.4 9 2.4 C11.4 2.4 13.2 3.4 14.4 5 L16.2 3.4 V8.6 H10.8 L12.8 6.6 C11.9 5.5 10.6 4.8 9 4.8 C6.8 4.8 5 6.2 4.6 8.2 Z" fill="#4a94e8" stroke="#2f6fc4" stroke-width=".6"/><path d="M16.8 10.8 C16.4 14.4 13.4 16.6 10 16.6 C7.6 16.6 5.8 15.6 4.6 14 L2.8 15.6 V10.4 H8.2 L6.2 12.4 C7.1 13.5 8.4 14.2 10 14.2 C12.2 14.2 14 12.8 14.4 10.8 Z" fill="#4a94e8" stroke="#2f6fc4" stroke-width=".6"/></svg>
<div class="a sep" style="left:610px;top:565px;height:17px"></div>
<div class="t" style="left:627px;top:567px;font-size:13px;color:#111;letter-spacing:.05px">Remove Paging:</div>
<div class="a" style="left:748px;top:567px;width:15px;height:15px;border:1px solid #8f8f8f;border-radius:1px;background:linear-gradient(135deg,#cfcfcf,#f4f4f4 60%,#fff)"></div>
<div class="a sep" style="left:772px;top:565px;height:17px"></div>
<svg class="a" style="left:780px;top:562px" width="20" height="20" viewBox="0 0 20 20"><circle cx="10" cy="10" r="9.6" fill="#4bb34b"/><path d="M5.2 10.2 L8.6 13.6 L14.8 6.6" fill="none" stroke="#fff" stroke-width="2.6" stroke-linecap="round" stroke-linejoin="round"/></svg>
<div class="t tt" style="left:805px;top:566px;letter-spacing:0">Select All Qty</div>
<div class="a sep" style="left:897px;top:565px;height:17px"></div>
<svg class="a" style="left:905px;top:562px" width="20" height="20" viewBox="0 0 20 20"><circle cx="10" cy="10" r="9.6" fill="#f02a50"/><path d="M5.2 10.2 L8.6 13.6 L14.8 6.6" fill="none" stroke="#fff" stroke-width="2.6" stroke-linecap="round" stroke-linejoin="round"/></svg>
<div class="t tt" style="left:930px;top:566px;letter-spacing:0">Select All Qty No Display Qty</div>
<div class="a sep" style="left:1111px;top:565px;height:17px"></div>
<svg class="a" style="left:1120px;top:561px" width="22" height="24" viewBox="0 0 22 24"><path d="M2 2.5 H10.5 L15 7 V20.5 H2 Z" fill="#fff" stroke="#141414" stroke-width="1.6"/><path d="M10.5 2.5 V7 H15" fill="none" stroke="#555" stroke-width="1"/><circle cx="14.8" cy="16.3" r="5.2" fill="#f2f2f2" stroke="#8a7a7a" stroke-width="1.2"/><path d="M12.4 18.8 L17.2 14" stroke="#e8641e" stroke-width="2.4"/><path d="M12 19.4 L13.2 18" stroke="#222" stroke-width="1.5"/><path d="M16.4 13.2 L18 14.8" stroke="#d02020" stroke-width="1.6"/></svg>
<div class="t tt" style="left:1145px;top:566px;letter-spacing:-.2px">Edit Line</div>
<div class="a sep" style="left:1209px;top:565px;height:17px"></div>
<svg class="a" style="left:1217px;top:563px" width="21" height="19" viewBox="0 0 21 19"><path d="M1.8 4.5 V1.8 H4.5 M16.5 1.8 H19.2 V4.5 M19.2 14.5 V17.2 H16.5 M4.5 17.2 H1.8 V14.5" fill="none" stroke="#a020f0" stroke-width="1.6"/><path d="M5 4 V14.5 M7.4 4 V12.5 M9.2 4 V14.5 M11.6 4 V12.5 M13.6 4 V14.5 M15.8 4 V14.5" stroke="#222" stroke-width="1.3"/><path d="M7.4 13.6 V14.5 M11.6 13.6 V14.5" stroke="#222" stroke-width="1.3"/></svg>
<div class="t tt" style="left:1242px;top:566px;letter-spacing:-.15px">Serial No.</div>
<div class="a sep" style="left:1313px;top:565px;height:17px"></div>
<!-- grid -->
<div class="a" style="left:316px;top:522px;width:1px;height:202px;background:#8db2e3"></div>
<div class="a" style="left:317px;top:592px;width:1054px;height:132px;background:#fff"></div>
<div class="a" style="left:317px;top:592px;width:1054px;height:27px;background:linear-gradient(#f9f9f9,#e3e4e6)"></div>
<div class="a gh" style="left:317px;width:47px;text-align:center;padding-left:0;">#</div>
<div class="a gh" style="left:364px;width:60px;letter-spacing:-0.25px;">Seq. No.</div>
<div class="a gh" style="left:424px;width:120px;letter-spacing:-.3px">Line Ref</div>
<div class="a gh" style="left:544px;width:120px;">Category</div>
<div class="a gh" style="left:664px;width:72px;">Cost Type</div>
<div class="a gh" style="left:736px;width:186px;letter-spacing:.12px">Item Description</div>
<div class="a gh" style="left:922px;width:120px;text-align:right;padding-right:18px;letter-spacing:-0.05px;">Qty Available</div>
<div class="a gh" style="left:1042px;width:96px;padding-left:8px;letter-spacing:-.3px">Process Qty</div>
<div class="a gh" style="left:1138px;width:120px;text-align:center;padding-left:0;letter-spacing:-0.4px;padding-left:11px;">Balance QTY</div>
<div class="a gh" style="left:1258px;width:96px;text-align:center;padding-left:0;padding-left:0;padding-right:8px;">Display Qty</div>
<div class="a gh" style="left:1354px;width:18px;"></div>
<div class="a gr" style="top:619px"><div class="c r" style="left:0;width:47px;background:linear-gradient(90deg,#f7f7f7,#e4e4e4);border-right:1px solid #d8d8d8;padding-right:5px">1</div><div class="c r" style="left:47px;width:60px;border-right:1px solid #dcdcdc">1.00</div><div class="c" style="left:107px;width:120px;border-right:1px solid #dcdcdc;padding-left:7px;letter-spacing:.65px">fffffffff</div><div class="c" style="left:227px;width:120px;border-right:1px solid #dcdcdc;padding-left:7px;">Stock</div><div class="c" style="left:347px;width:72px;border-right:1px solid #dcdcdc;padding-left:7px">Quote</div><div class="c" style="left:419px;width:186px;border-right:1px solid #dcdcdc;padding-left:7px;letter-spacing:-.35px">HW/CASE - HW Case</div><div class="c r" style="left:605px;width:120px;border-right:1px solid #dcdcdc;padding-right:8px">1</div><div class="c r g" style="left:725px;width:96px;padding-right:8px">1</div><div class="c" style="left:821px;width:120px"></div><div class="c r g" style="left:941px;width:96px;padding-right:8px">1</div></div>
<div class="a gr alt" style="top:644px"><div class="c r" style="left:0;width:47px;background:linear-gradient(90deg,#f7f7f7,#e4e4e4);border-right:1px solid #d8d8d8;padding-right:5px">2</div><div class="c r" style="left:47px;width:60px;border-right:1px solid #dcdcdc">1.00</div><div class="c" style="left:107px;width:120px;border-right:1px solid #dcdcdc;padding-left:7px">ref</div><div class="c" style="left:227px;width:120px;border-right:1px solid #dcdcdc;padding-left:7px;">Stock</div><div class="c" style="left:347px;width:72px;border-right:1px solid #dcdcdc;padding-left:7px">Quote</div><div class="c" style="left:419px;width:186px;border-right:1px solid #dcdcdc;padding-left:7px;letter-spacing:-.22px">HW/CPU - HW CPU I7</div><div class="c r" style="left:605px;width:120px;border-right:1px solid #dcdcdc;padding-right:8px">1</div><div class="c r g" style="left:725px;width:96px;padding-right:8px">1</div><div class="c" style="left:821px;width:120px"></div><div class="c r g" style="left:941px;width:96px;padding-right:8px">1</div></div>
<div class="a gr" style="top:669px"><div class="c r" style="left:0;width:47px;background:linear-gradient(90deg,#f7f7f7,#e4e4e4);border-right:1px solid #d8d8d8;padding-right:5px">3</div><div class="c r" style="left:47px;width:60px;border-right:1px solid #dcdcdc">1.00</div><div class="c" style="left:107px;width:120px;border-right:1px solid #dcdcdc;padding-left:7px"></div><div class="c" style="left:227px;width:120px;border-right:1px solid #dcdcdc;padding-left:7px;font-weight:bold;color:#138a13;letter-spacing:.35px;">Service</div><div class="c" style="left:347px;width:72px;border-right:1px solid #dcdcdc;padding-left:7px">Quote</div><div class="c" style="left:419px;width:186px;border-right:1px solid #dcdcdc;padding-left:7px;letter-spacing:-.2px">LAB/GEN - Labour General</div><div class="c r" style="left:605px;width:120px;border-right:1px solid #dcdcdc;padding-right:8px">1</div><div class="c r g" style="left:725px;width:96px;padding-right:8px">1</div><div class="c" style="left:821px;width:120px"></div><div class="c r g" style="left:941px;width:96px;padding-right:8px">1</div></div>
<div class="a gr alt" style="top:693px"><div class="c r" style="left:0;width:47px;background:linear-gradient(90deg,#f7f7f7,#e4e4e4);border-right:1px solid #d8d8d8;padding-right:5px">4</div><div class="c r" style="left:47px;width:60px;border-right:1px solid #dcdcdc">1.00</div><div class="c" style="left:107px;width:120px;border-right:1px solid #dcdcdc;padding-left:7px"></div><div class="c" style="left:227px;width:120px;border-right:1px solid #dcdcdc;padding-left:7px;font-weight:bold;color:#138a13;letter-spacing:.35px;">Service</div><div class="c" style="left:347px;width:72px;border-right:1px solid #dcdcdc;padding-left:7px">Quote</div><div class="c" style="left:419px;width:186px;border-right:1px solid #dcdcdc;padding-left:7px;letter-spacing:.03px">LAB/INST - Labour Installa...</div><div class="c r" style="left:605px;width:120px;border-right:1px solid #dcdcdc;padding-right:8px">1</div><div class="c r g" style="left:725px;width:96px;padding-right:8px">1</div><div class="c" style="left:821px;width:120px"></div><div class="c r g" style="left:941px;width:96px;padding-right:8px">1</div></div>

<!-- marker B -->
<div class="a red" style="left:1107px;top:549px;width:203px;height:44px"></div>
<div class="a gc" style="left:1184px;top:511px;width:40px;height:40px;border-radius:20px;line-height:42px">B</div>
<!--WIN-->
</body>
</html>
